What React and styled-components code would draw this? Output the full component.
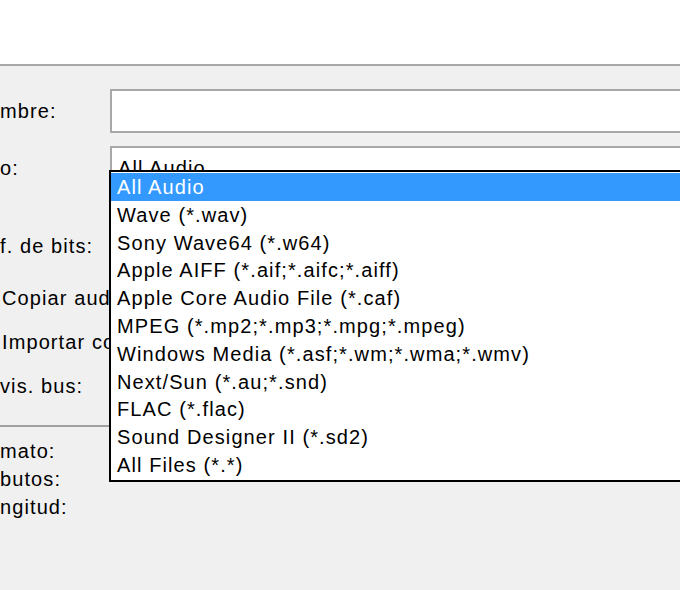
import React from 'react';
import styled, { createGlobalStyle } from 'styled-components';

const Global = createGlobalStyle`
  html, body { margin: 0; padding: 0; background: #f0f0f0; }
  body { font-family: "Liberation Sans", Arial, sans-serif; font-size: 20px; letter-spacing: 1.1px; color: #000; overflow: hidden; }
`;

const Page = styled.div`
  width: 680px;
  height: 590px;
  position: relative;
  overflow: hidden;
`;

const TopArea = styled.div`
  height: 64px;
  background: #fff;
  border-bottom: 2px solid #a8a8a8;
`;

const Form = styled.div`
  position: relative;
  padding-top: 20px;
`;

const Row = styled.div`
  display: flex;
  align-items: center;
  height: ${p => p.h}px;
  margin-top: ${p => p.gap || 0}px;
`;

const Label = styled.div`
  width: 110px;
  flex: none;
  padding-left: ${p => p.indent || 0}px;
  white-space: nowrap;
  overflow: hidden;
  box-sizing: border-box;
`;

const Field = styled.div`
  flex: 1;
  height: 44px;
  box-sizing: border-box;
  background: #fff;
  border: 2px solid #a8a8a8;
  border-right: none;
  display: flex;
  align-items: center;
  padding-left: 6px;
`;

const Divider = styled.div`
  width: 110px;
  height: 2px;
  background: #a0a0a0;
  margin: 17px 0 10px;
`;

const InfoLabel = styled.div`
  height: 28px;
  line-height: 28px;
`;

const List = styled.ul`
  position: absolute;
  left: 109px;
  top: 104px;
  width: 580px;
  margin: 0;
  padding: 1px 0;
  list-style: none;
  background: #fff;
  border: 2px solid #000;
`;

const Item = styled.li`
  height: 27.8px;
  line-height: 28px;
  padding-left: 6px;
  white-space: nowrap;
  background: ${p => (p.active ? '#3399ff' : 'transparent')};
  color: ${p => (p.active ? '#fff' : '#000')};
`;

const items = [
  'All Audio',
  'Wave (*.wav)',
  'Sony Wave64 (*.w64)',
  'Apple AIFF (*.aif;*.aifc;*.aiff)',
  'Apple Core Audio File (*.caf)',
  'MPEG (*.mp2;*.mp3;*.mpg;*.mpeg)',
  'Windows Media (*.asf;*.wm;*.wma;*.wmv)',
  'Next/Sun (*.au;*.snd)',
  'FLAC (*.flac)',
  'Sound Designer II (*.sd2)',
  'All Files (*.*)',
];

export default function App() {
  return (
    <Page>
      <Global />
      <TopArea />
      <Form>
        <Row h={50}>
          <Label>mbre:</Label>
          <Field />
        </Row>
        <Row h={64}>
          <Label>o:</Label>
          <Field>All Audio</Field>
        </Row>
        <Row h={60} gap={16}><Label>f. de bits:</Label></Row>
        <Row h={44}><Label indent={2}>Copiar aud</Label></Row>
        <Row h={44}><Label indent={2}>Importar co</Label></Row>
        <Row h={44}><Label>vis. bus:</Label></Row>
        <Divider />
        <InfoLabel>mato:</InfoLabel>
        <InfoLabel>butos:</InfoLabel>
        <InfoLabel>ngitud:</InfoLabel>
        <List>
          {items.map((t, i) => (
            <Item key={t} active={i === 0}>{t}</Item>
          ))}
        </List>
      </Form>
    </Page>
  );
}
